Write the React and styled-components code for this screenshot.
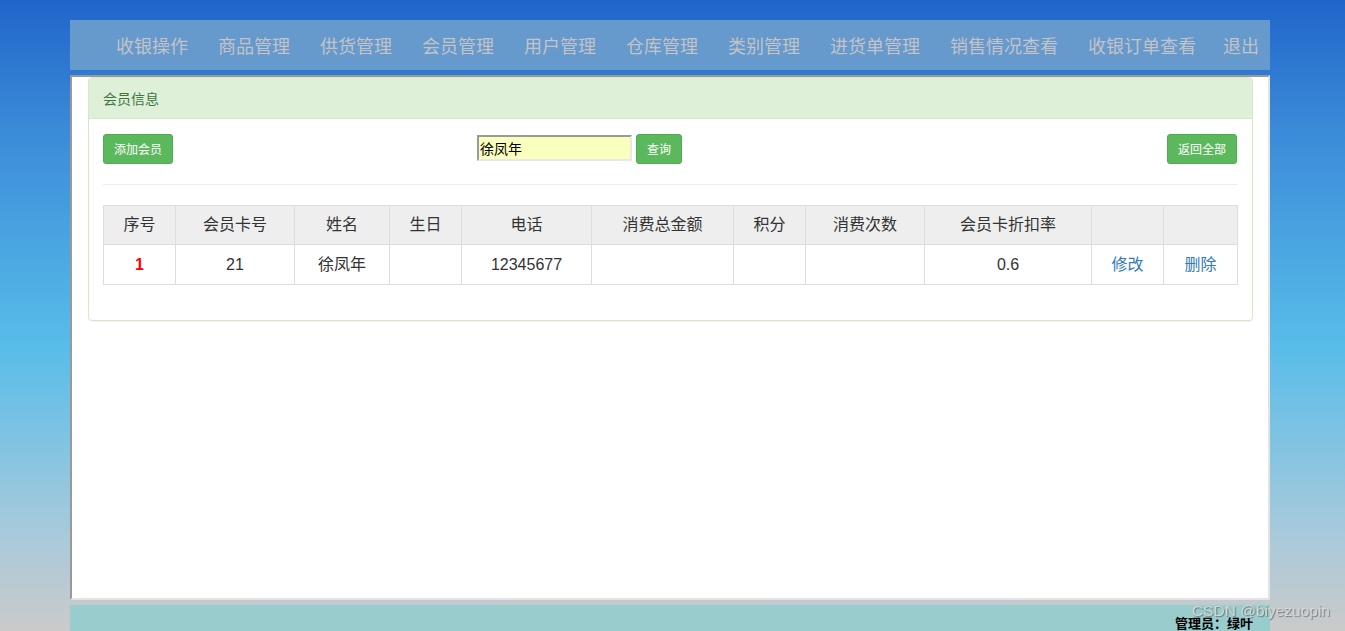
import React from "react";
import styled, { createGlobalStyle } from "styled-components";

const GlobalStyle = createGlobalStyle`
  html, body {
    margin: 0;
    padding: 0;
  }
  body {
    min-height: 631px;
    background: linear-gradient(to bottom, #2165ca 0%, #3a8ad8 20%, #58bde9 55%, #a9cadb 85%, #cacaca 100%);
    font-family: "Liberation Sans", Arial, "Noto Sans CJK SC", sans-serif;
    color: #333;
  }
  * { box-sizing: border-box; }
`;

const Page = styled.div`
  position: relative;
  width: 1200px;
  margin-left: 70px;
  padding-top: 20px;
  height: 631px;
  overflow: hidden;
`;

const Nav = styled.ul`
  display: flex;
  gap: 30px;
  margin: 0;
  padding: 0 0 0 46px;
  list-style: none;
  height: 50px;
  background: #6699cc;
`;

const NavItem = styled.li`
  line-height: 50px;
  font-size: 18px;
  color: #c3c3c8;
  font-family: "Noto Sans CJK SC", "Liberation Serif", serif;
  white-space: nowrap;
  margin-left: ${(p) => (p.$last ? "-3px" : "0")};
`;

const Main = styled.div`
  margin-top: 5px;
  height: 525px;
  background: #fff;
  border-style: solid;
  border-width: 2px;
  border-color: #999 #e3e3e3 #e3e3e3 #999;
  padding: 0 15px 0 16px;
`;

const Panel = styled.div`
  border: 1px solid #d6e9c6;
  border-radius: 4px;
  background: #fff;
  box-shadow: 0 1px 1px rgba(0, 0, 0, 0.05);
`;

const PanelHeading = styled.div`
  background: #dff0d8;
  color: #3c763d;
  border-bottom: 1px solid #d6e9c6;
  border-radius: 3px 3px 0 0;
  padding: 10px 14px;
  font-size: 14px;
  line-height: 20px;
  font-family: "Noto Sans CJK SC", sans-serif;
`;

const PanelBody = styled.div`
  padding: 15px 15px 15px 14px;
`;

const Toolbar = styled.div`
  display: grid;
  grid-template-columns: 374px 1fr auto;
  align-items: center;
  height: 30px;
`;

const SearchGroup = styled.div`
  display: flex;
  align-items: center;
  gap: 4px;
`;

const Button = styled.button`
  background: #5cb85c;
  border: 1px solid #4cae4c;
  color: #fff;
  font-size: 12px;
  line-height: 18px;
  padding: 5px 10px;
  border-radius: 3px;
  font-family: "Noto Sans CJK SC", sans-serif;
  cursor: pointer;
  justify-self: ${(p) => (p.$end ? "end" : "start")};
`;

const SearchInput = styled.input`
  width: 155px;
  height: 26px;
  background: #faffbd;
  border-style: solid;
  border-width: 2px;
  border-color: #999 #e8e8e8 #e8e8e8 #999;
  font-size: 14px;
  padding: 0 1px;
  color: #000;
  font-family: "Noto Sans CJK SC", sans-serif;
  margin-top: -3px;
`;

const Divider = styled.hr`
  margin: 20px 0;
  border: 0;
  border-top: 1px solid #eee;
`;

const Table = styled.table`
  width: 1134px;
  border-collapse: collapse;
  border: 1px solid #ddd;
  margin-bottom: 20px;
  table-layout: fixed;
  font-size: 16px;
`;

const Col = styled.col`
  width: ${(p) => p.$w}px;
`;

const Th = styled.th`
  background: #eee;
  border: 1px solid #ddd;
  padding: 0 8px;
  height: 39px;
  line-height: 22px;
  font-weight: normal;
  color: #333;
  text-align: center;
`;

const Td = styled.td`
  border: 1px solid #ddd;
  padding: 0 8px;
  height: 40px;
  line-height: 22px;
  text-align: center;
  color: #333;
`;

const Index = styled.span`
  color: #f00;
  font-weight: bold;
`;

const Link = styled.a`
  color: #337ab7;
  text-decoration: none;
`;

const Footer = styled.div`
  margin-top: 5px;
  height: 40px;
  background: #99cccc;
  text-align: right;
  padding: 8px 17px 0 0;
  font-size: 13px;
  font-weight: bold;
  color: #000;
  font-family: "Noto Sans CJK SC", sans-serif;
`;

const Watermark = styled.div`
  position: fixed;
  right: 15px;
  top: 602px;
  font-size: 15.5px;
  font-family: "Liberation Sans", Arial, sans-serif;
  color: rgba(215, 215, 215, 0.95);
  text-shadow: 1px 1px 1px rgba(60, 60, 60, 0.55);
  pointer-events: none;
`;

const navItems = [
  "收银操作",
  "商品管理",
  "供货管理",
  "会员管理",
  "用户管理",
  "仓库管理",
  "类别管理",
  "进货单管理",
  "销售情况查看",
  "收银订单查看",
  "退出",
];

const cols = [72, 119, 95, 72, 130, 142, 72, 119, 167, 72, 74];
const headers = ["序号", "会员卡号", "姓名", "生日", "电话", "消费总金额", "积分", "消费次数", "会员卡折扣率", "", ""];

export default function App() {
  return (
    <>
      <GlobalStyle />
      <Page>
        <Nav>
          {navItems.map((n, i) => (
            <NavItem key={n} $last={i === navItems.length - 1}>{n}</NavItem>
          ))}
        </Nav>
        <Main>
          <Panel>
            <PanelHeading>会员信息</PanelHeading>
            <PanelBody>
              <Toolbar>
                <Button>添加会员</Button>
                <SearchGroup>
                  <SearchInput defaultValue="徐凤年" />
                  <Button>查询</Button>
                </SearchGroup>
                <Button $end>返回全部</Button>
              </Toolbar>
              <Divider />
              <Table>
                <colgroup>
                  {cols.map((w, i) => (
                    <Col key={i} $w={w} />
                  ))}
                </colgroup>
                <thead>
                  <tr>
                    {headers.map((h, i) => (
                      <Th key={i}>{h}</Th>
                    ))}
                  </tr>
                </thead>
                <tbody>
                  <tr>
                    <Td><Index>1</Index></Td>
                    <Td>21</Td>
                    <Td>徐凤年</Td>
                    <Td></Td>
                    <Td>12345677</Td>
                    <Td></Td>
                    <Td></Td>
                    <Td></Td>
                    <Td>0.6</Td>
                    <Td><Link href="#">修改</Link></Td>
                    <Td><Link href="#">删除</Link></Td>
                  </tr>
                </tbody>
              </Table>
            </PanelBody>
          </Panel>
        </Main>
        <Footer>管理员：绿叶</Footer>
      </Page>
      <Watermark>CSDN @biyezuopin</Watermark>
    </>
  );
}
